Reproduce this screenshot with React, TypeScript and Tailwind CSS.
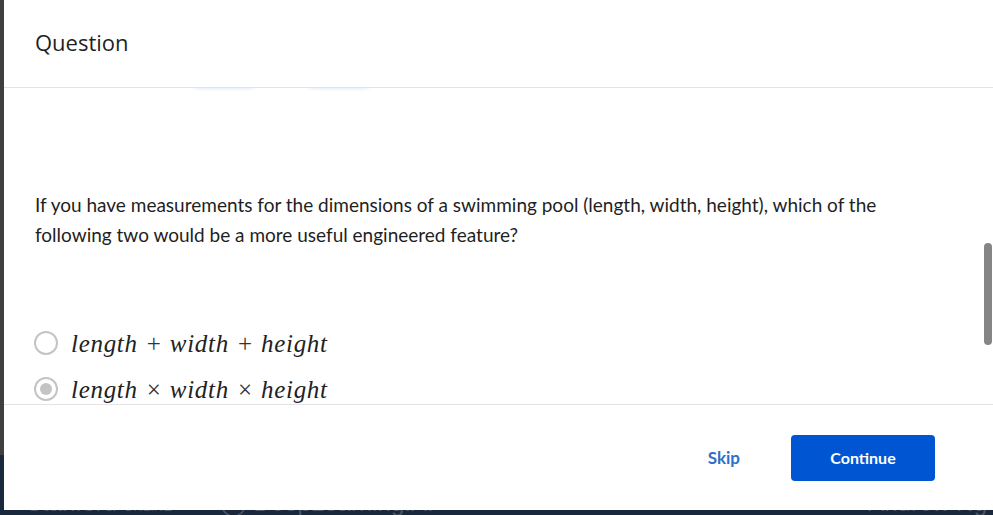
import React from 'react';

const options = [
  { id: 'sum', vars: ['length', 'width', 'height'], op: '+', checked: false },
  { id: 'product', vars: ['length', 'width', 'height'], op: '×', checked: true },
];

const MathExpr = ({ vars, op }: { vars: string[]; op: string }) => (
  <span className="font-['Liberation_Serif',serif] text-[25px] text-[#222] leading-none">
    {vars.map((v, i) => (
      <React.Fragment key={v}>
        {i > 0 && <span className="not-italic mx-[9px] text-[#333]">{op}</span>}
        <span className="italic tracking-[0.7px]">{v}</span>
      </React.Fragment>
    ))}
  </span>
);

const Radio = ({ checked }: { checked: boolean }) => (
  <span className="flex h-[24px] w-[24px] shrink-0 items-center justify-center rounded-full border-2 border-[#c4c4c4] bg-white">
    {checked && <span className="h-[12px] w-[12px] rounded-full bg-[#c4c4c4]" />}
  </span>
);

export default function App() {
  return (
    <div className="relative h-[515px] w-[993px] overflow-hidden font-['Open_Sans',sans-serif]">
      {/* dimmed page behind the dialog */}
      <div className="flex h-full flex-col">
        <div className="h-[475px] bg-[#3f3f3f]" />
        <div className="flex flex-1 items-start bg-[#19283c] pl-[26px] pt-[36px] font-['Liberation_Sans',sans-serif] text-[24px] leading-none text-[#4a5566]">
          <span>Stanford <span className="text-[13px]">ONLINE</span></span>
          <span className="ml-[48px]">◯ DeepLearning.AI</span>
          <span className="ml-auto mr-[6px]">Andrew Ng</span>
        </div>
      </div>

      {/* dialog */}
      <div className="absolute left-[4px] top-0 flex h-[510px] w-[989px] flex-col bg-white">
        <div className="flex h-[88px] shrink-0 items-center border-b border-[#e3e3e3] pl-[31px]">
          <h2 className="pb-[3px] text-[22px] text-[#1f1f1f]">Question</h2>
        </div>

        <div className="relative flex-1 overflow-hidden">
          <div className="absolute left-[190px] top-[-6px] h-[6px] w-[60px] rounded-full bg-[#d6e4f7] blur-[2px]" />
          <div className="absolute left-[305px] top-[-6px] h-[6px] w-[60px] rounded-full bg-[#d6e4f7] blur-[2px]" />

          <p className="pl-[31px] pr-[90px] pt-[102px] font-['Lato',sans-serif] text-[19px] leading-[30px] text-[#1f1f1f]">
            If you have measurements for the dimensions of a swimming pool (length, width, height), which of the
            following two would be a more useful engineered feature?
          </p>

          <div className="mt-[81px] flex flex-col gap-[22px] pl-[30px]">
            {options.map(o => (
              <label key={o.id} className="flex h-[24px] items-center gap-[13px]">
                <Radio checked={o.checked} />
                <MathExpr vars={o.vars} op={o.op} />
              </label>
            ))}
          </div>

          <div className="absolute right-[1px] top-[155px] h-[102px] w-[8px] rounded-full bg-[#858585]" />
        </div>

        <div className="flex h-[106px] shrink-0 items-center justify-end gap-[51px] border-t border-[#e3e3e3] pr-[58px]">
          <button className="font-['Lato',sans-serif] text-[17px] font-bold text-[#2d6fce]">Skip</button>
          <button className="h-[46px] w-[144px] rounded-[4px] bg-[#0056d2] font-['Lato',sans-serif] text-[16px] font-bold text-white">
            Continue
          </button>
        </div>
      </div>
    </div>
  );
}
